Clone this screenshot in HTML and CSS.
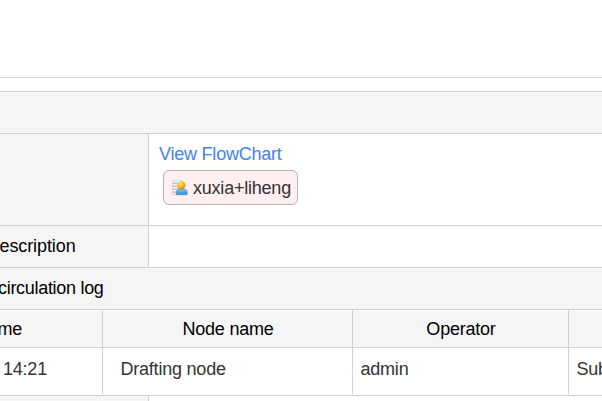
FILE: index.html
```html
<!DOCTYPE html>
<html lang="en">
<head>
<meta charset="utf-8">
<title>Flow</title>
<link rel="stylesheet" href="styles.css">
</head>
<body>
<header class="top"></header>
<main class="form">
  <div class="row band"></div>
  <div class="row flow">
    <div class="label"></div>
    <div class="value">
      <a class="link">View FlowChart</a>
      <div class="chip">
        <svg class="user" width="16" height="16" viewBox="0 0 16 16">
          <defs>
            <linearGradient id="body" x1="0" y1="0" x2="0" y2="1"><stop offset="0" stop-color="#7fc8f5"/><stop offset="1" stop-color="#2f8fd6"/></linearGradient>
            <radialGradient id="head" cx=".4" cy=".3" r=".8"><stop offset="0" stop-color="#ffe87a"/><stop offset=".5" stop-color="#f8b420"/><stop offset="1" stop-color="#c87808"/></radialGradient>
          </defs>
          <path fill="#d8dadb" d="M0 0h11v15H0z"/>
          <path stroke="#fafafa" d="M1 1.5h10M1 4.5h10M1 7.5h10M1 10.5h10M1 13.5h4"/>
          <path stroke="#c5c8ca" d="M0 3.5h5M0 6.5h4M0 9.5h4M0 12.5h4"/>
          <path fill="url(#body)" stroke="#3c8fcb" stroke-width=".6" d="M4.3 14.7v-2.7c0-2 1.3-3 3-3h4.4c2 0 3.5 1 3.5 3v2.7z"/>
          <circle cx="9.2" cy="5.4" r="4.2" fill="url(#head)"/>
        </svg>
        <span>xuxia+liheng</span>
      </div>
    </div>
  </div>
  <div class="row">
    <div class="label"><span class="desc">escription</span></div>
    <div class="value"></div>
  </div>
  <div class="row band"><span class="log">circulation log</span></div>
  <div class="grid head">
    <div><span class="time">me</span></div><div>Node name</div><div>Operator</div><div></div>
  </div>
  <div class="grid data">
    <div>14:21</div><div>Drafting node</div><div>admin</div><div>Sub</div>
  </div>
  <div class="row last"><div class="label"></div><div class="value"></div></div>
</main>
</body>
</html>
```
FILE: styles.css
```css
* { box-sizing: border-box; }
body { margin: 0; width: 602px; height: 401px; overflow: hidden; background: #fff; color: #000; font: 18px/24px "Liberation Sans", Arial, sans-serif; letter-spacing: -.22px; white-space: nowrap; }
.top { height: 78px; border-bottom: 1px solid #d5d5d5; margin-bottom: 13px; }
.row { display: flex; height: 42px; border-top: 1px solid #d0d0d0; }
.band { background: #f5f5f5; padding-top: 8px; }
.flow { height: 92px; }
.label { width: 149px; flex: none; background: #f5f5f5; border-right: 1px solid #d0d0d0; padding-top: 8px; overflow: hidden; }
.value { flex: 1; padding: 8px 0 0 11px; }
.desc { display: block; margin-left: -.5px; letter-spacing: -.1px; }
.log { margin-left: -2px; letter-spacing: -.3px; }
.link { display: block; height: 28px; margin-left: -1px; color: #4381f5; }
.chip { display: flex; align-items: center; width: 135px; height: 35px; margin-left: 3px; border: 1px solid #b5b1b1; border-radius: 6px; background: #ffeff0; color: #333; padding-left: 8px; gap: 5px; }
.user { flex: none; margin-top: 1px; }
.grid { display: grid; grid-template-columns: 103px 250px 216px 1fr; border-top: 1px solid #d0d0d0; overflow: hidden; }
.grid > div + div { border-left: 1px solid #d0d0d0; margin-left: -1px; }
.head { height: 38px; background: #f5f5f5; text-align: center; box-shadow: inset 0 1px #fff; }
.head > div { padding-top: 7px; overflow: hidden; }
.time { display: block; text-align: left; margin-left: -2.5px; }
.data { height: 48px; padding-bottom: 1px; color: #333; }
.data > div { padding: 9px 0 0 7.5px; }
.data > div:first-child { padding-left: 3px; }
.data > div:nth-child(2) { padding-left: 17.5px; }
.last { height: 6px; }
```
